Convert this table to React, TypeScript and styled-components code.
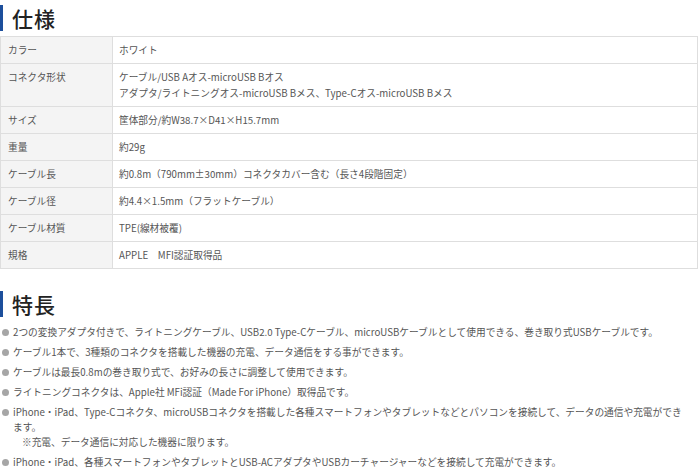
import styled, { createGlobalStyle } from "styled-components";

const GlobalStyle = createGlobalStyle`
  body {
    margin: 0;
    background: #fff;
    font-family: "Noto Sans CJK JP", "Noto Sans", sans-serif;
    color: #555;
  }
`;

const Page = styled.div`
  padding: 5px 2px 0 0;
`;

const Heading = styled.h2<{ $top?: number }>`
  margin: ${(p) => p.$top ?? 0}px 0 0 0;
  height: 26px;
  line-height: 26px;
  border-left: 3px solid #1d4f9c;
  padding-left: 9px;
  font-size: 21px;
  font-weight: 500;
  color: #222;
  letter-spacing: 1px;
`;

const Table = styled.table`
  margin-top: 5px;
  width: 100%;
  border-collapse: collapse;
  font-size: 9.7px;
  line-height: 16px;
`;

const Label = styled.th`
  width: 97px;
  background: #f4f4f4;
  border: 1px solid #dedede;
  padding: 5px 7px 5px 7px;
  text-align: left;
  font-weight: 400;
  vertical-align: top;
  color: #555;
`;

const Value = styled.td`
  border: 1px solid #dedede;
  padding: 5px 6px;
  vertical-align: top;
  color: #555;
`;

const List = styled.ul`
  list-style: none;
  margin: 8px 0 0 0;
  padding: 0;
  font-size: 9.7px;
  line-height: 15px;
`;

const Item = styled.li`
  position: relative;
  padding-left: 13px;
  margin-bottom: 5px;
  padding-right: 8px;

  &::before {
    content: "";
    position: absolute;
    left: 2px;
    top: 4px;
    width: 7px;
    height: 7px;
    border-radius: 50%;
    background: #a6a6a6;
  }
`;

const Note = styled.span`
  display: block;
  padding-left: 9px;
`;

const specs: [string, string[]][] = [
  ["カラー", ["ホワイト"]],
  [
    "コネクタ形状",
    [
      "ケーブル/USB Aオス-microUSB Bオス",
      "アダプタ/ライトニングオス-microUSB Bメス、Type-Cオス-microUSB Bメス",
    ],
  ],
  ["サイズ", ["筐体部分/約W38.7×D41×H15.7mm"]],
  ["重量", ["約29g"]],
  ["ケーブル長", ["約0.8m（790mm±30mm）コネクタカバー含む（長さ4段階固定）"]],
  ["ケーブル径", ["約4.4×1.5mm（フラットケーブル）"]],
  ["ケーブル材質", ["TPE(線材被覆)"]],
  ["規格", ["APPLE　MFI認証取得品"]],
];

export default function App() {
  return (
    <Page>
      <GlobalStyle />
      <Heading>仕様</Heading>
      <Table>
        <tbody>
          {specs.map(([label, lines]) => (
            <tr key={label}>
              <Label>{label}</Label>
              <Value>
                {lines.map((l, i) => (
                  <div key={i}>{l}</div>
                ))}
              </Value>
            </tr>
          ))}
        </tbody>
      </Table>

      <Heading $top={22}>特長</Heading>
      <List>
        <Item>
          2つの変換アダプタ付きで、ライトニングケーブル、USB2.0 Type-Cケーブル、microUSBケーブルとして使用できる、巻き取り式USBケーブルです。
        </Item>
        <Item>ケーブル1本で、3種類のコネクタを搭載した機器の充電、データ通信をする事ができます。</Item>
        <Item>ケーブルは最長0.8mの巻き取り式で、お好みの長さに調整して使用できます。</Item>
        <Item>ライトニングコネクタは、Apple社 MFi認証（Made For iPhone）取得品です。</Item>
        <Item>
          iPhone・iPad、Type-Cコネクタ、microUSBコネクタを搭載した各種スマートフォンやタブレットなどとパソコンを接続して、データの通信や充電ができます。
          <Note>※充電、データ通信に対応した機器に限ります。</Note>
        </Item>
        <Item>iPhone・iPad、各種スマートフォンやタブレットとUSB-ACアダプタやUSBカーチャージャーなどを接続して充電ができます。</Item>
      </List>
    </Page>
  );
}
